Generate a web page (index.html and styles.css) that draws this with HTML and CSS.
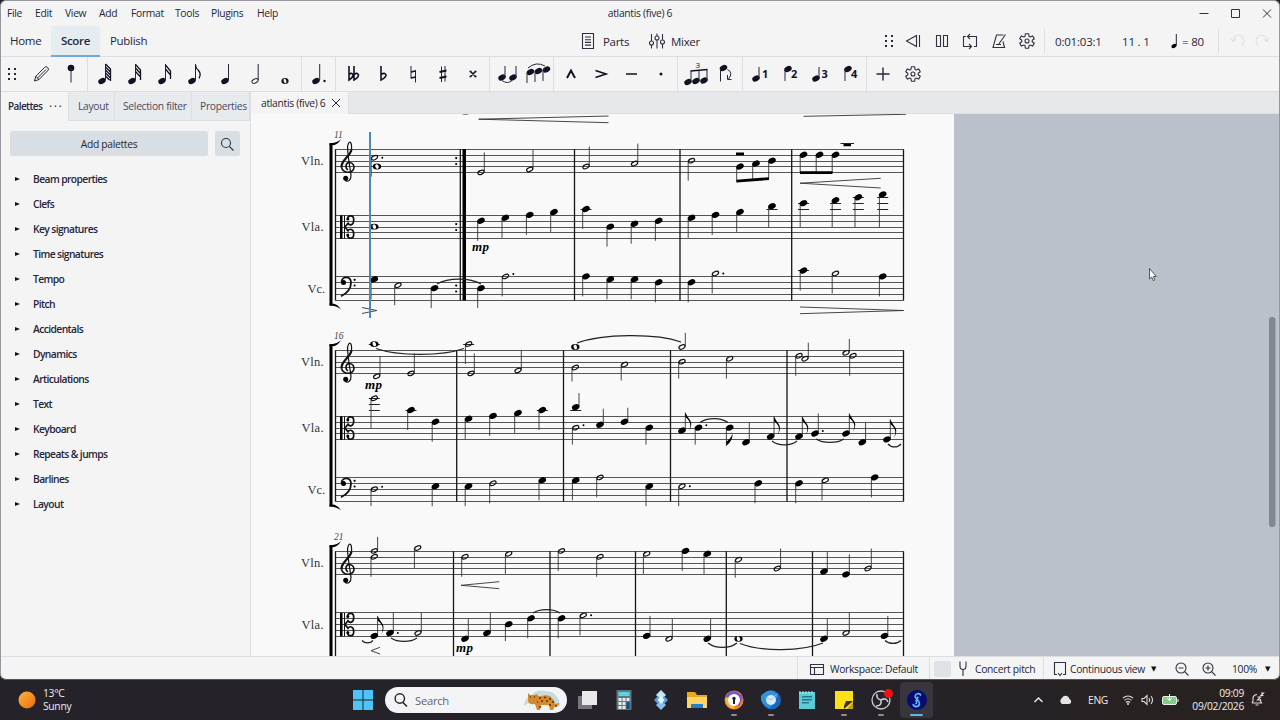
FILE: index.html
```html
<!DOCTYPE html>
<html lang="en">

<head>
  <meta charset="UTF-8" />
  <title>atlantis (five) 6</title>
  <meta name="viewport" content="width=device-width, initial-scale=1.0" />
  <link rel="stylesheet" href="styles.css">
</head>

<body>
  <!-- shared icons -->
  <svg class="defs" width="0" height="0">
    <symbol id="grip" viewBox="0 0 24 24">
      <g fill="#262638" stroke="none"><rect x="8" y="6" width="2" height="2"/><rect x="8" y="11" width="2" height="2"/><rect x="8" y="16" width="2" height="2"/><rect x="14" y="6" width="2" height="2"/><rect x="14" y="11" width="2" height="2"/><rect x="14" y="16" width="2" height="2"/></g>
    </symbol>
    <symbol id="gear" viewBox="0 0 24 24">
      <path d="M10 7.400 L10.300 4.700 H13.700 L14 7.400 L15 8 L17.600 6.900 L19.300 9.700 L17.200 11.300 V12.700 L19.300 14.300 L17.600 17.100 L15 16 L14 16.600 L13.700 19.300 H10.300 L10 16.600 L9 16 L6.400 17.100 L4.700 14.300 L6.800 12.700 V11.300 L4.700 9.700 L6.400 6.900 L9 8Z" stroke-linejoin="round"/>
      <circle cx="12" cy="12" r="2"/>
    </symbol>
    <symbol id="head" viewBox="-6 -6 12 12" overflow="visible">
      <ellipse rx="3.900" ry="2.800" transform="rotate(-25)"/>
    </symbol>
    <symbol id="lens" viewBox="0 0 24 24">
      <circle cx="11" cy="11" r="4.500"/><path d="M14.300 14.300 L18.500 18.500"/>
    </symbol>
  </svg>

  <div class="window">
    <header class="titlebar">
      <nav class="menu">
        <span>File</span><span>Edit</span><span>View</span><span>Add</span><span>Format</span><span>Tools</span><span>Plugins</span><span>Help</span>
      </nav>
      <div class="title">atlantis (five) 6</div>
      <svg class="winbuttons" width="96" height="24" viewBox="0 0 96 24">
        <path d="M16.500 12.500 h9 M48.500 8.500 h8 v8 h-8z M80 8.500 l8 8 M88 8.500 l-8 8"/>
      </svg>
    </header>

    <div class="mainbar">
      <nav class="pages">
        <span>Home</span><span class="active">Score</span><span>Publish</span>
      </nav>
      <div class="panels">
        <svg class="ic" width="24" height="24" viewBox="0 0 24 24"><path d="M6.500 4.500 h11 v15 h-11z M9 8 h6 M9 10.700 h6 M9 13.400 h6 M9 16.100 h6"/></svg><span class="parts">Parts</span>
        <svg class="ic" width="24" height="24" viewBox="0 0 24 24"><path d="M6.500 5 v7 M6.500 16 v3.500 M12 4.500 v2.500 M12 11 v8.500 M17.500 5 v6 M17.500 15 v4.500"/><circle cx="6.500" cy="14" r="2"/><circle cx="12" cy="9" r="2"/><circle cx="17.500" cy="13" r="2"/></svg><span>Mixer</span>
      </div>
      <div class="playback">
        <svg class="ic" width="24" height="24"><use href="#grip"/></svg>
        <svg class="ic" width="24" height="24" viewBox="0 0 24 24"><path d="M15.500 6.500 v11 L5.500 12z M18.500 6 v12"/></svg>
        <svg class="ic" width="24" height="24" viewBox="0 0 24 24"><path d="M6.500 6.500 h4 v11 h-4z M13.500 6.500 h4 v11 h-4z"/></svg>
        <svg class="ic" width="24" height="24" viewBox="0 0 24 24"><path d="M8 7.500 H5.500 v10 h7.500 M9.500 7.500 h9 v10 h-2.500 M12 5 l-2.500 2.500 l2.500 2.500 M11 15 l2.500 2.500 l-2.500 2.500"/></svg>
        <svg class="ic" width="24" height="24" viewBox="0 0 24 24"><path d="M16.500 6 H9.500 L6 18.500 h11.500 l-1.500-6 M11.500 15.500 L18.500 5.500 M9 15.500 h5"/></svg>
        <svg class="ic" width="24" height="24"><use href="#gear"/></svg>
      </div>
      <div class="timing">
        <span class="clock">0:01:03:1</span>
        <span class="beat">11 . 1</span>
        <svg width="10" height="18" viewBox="0 0 10 18"><ellipse cx="4" cy="14" rx="2.700" ry="1.900" transform="rotate(-25 4 14)"/><path d="M6.300 13.500 V2" stroke="#262638"/></svg>
        <span class="bpm">= 80</span>
      </div>
      <svg class="ic faded" width="58" height="24" viewBox="0 0 58 24"><path d="M14 12 a5.500 5.500 0 1 1 9 4 M11.500 9 l2.500 3.500 l3.500 -2.500 M48 12 a5.500 5.500 0 1 0 -9 4 M50.500 9 l-2.500 3.500 l-3.500 -2.500"/></svg>
    </div>

    <div class="notebar">
      <div class="group first">
        <svg class="ic" width="24" height="24"><use href="#grip"/></svg>
        <svg width="30" height="30" viewBox="0 0 30 30"><path class="line" d="M8.500 22 L9.800 17.300 L18.500 8.500 a1.800 1.800 0 0 1 3.200 3.200 L13 20.500z M9.800 17.300 l3.200 3.200 M11.500 19 L20 10.500"/></svg>
        <svg width="30" height="30" viewBox="0 0 30 30"><circle cx="15" cy="9" r="3.300"/><path class="line" d="M15 9 V23.500"/></svg>
      </div>
      <div class="group">
        <svg width="30" height="30" viewBox="0 0 30 30"><use href="#head" x="6" y="16" width="12" height="12"/><path class="line" d="M15.500 21 V5"/><path class="flag" d="M15.500 5 l5 5 v4 M15.500 8 l5 5 v4 M15.500 11 l5 5 v4 M15.500 14 l5 5 v3 M15.500 17 l4 4"/></svg>
        <svg width="30" height="30" viewBox="0 0 30 30"><use href="#head" x="6" y="16" width="12" height="12"/><path class="line" d="M15.500 21 V5"/><path class="flag" d="M15.500 5.500 l5 5.500 v4 M15.500 9 l5 5.500 v4 M15.500 12.500 l5 5.500 v3"/></svg>
        <svg width="30" height="30" viewBox="0 0 30 30"><use href="#head" x="6" y="16" width="12" height="12"/><path class="line" d="M15.500 21 V5"/><path class="flag" d="M15.500 6 l5 6 v4 M15.500 10 l5 6 v4"/></svg>
        <svg width="30" height="30" viewBox="0 0 30 30"><use href="#head" x="6" y="16" width="12" height="12"/><path class="line" d="M15.500 21 V5"/><path class="flag" d="M15.500 6 q0 3 3 5.500 q3 3 .5 8"/></svg>
        <svg width="30" height="30" viewBox="0 0 30 30"><use href="#head" x="9" y="16" width="12" height="12"/><path class="line" d="M18.500 21 V5"/></svg>
        <svg width="30" height="30" viewBox="0 0 30 30"><ellipse class="line" cx="15" cy="22" rx="3.300" ry="2" transform="rotate(-25 15 22)"/><path class="line" d="M18.200 21 V5"/></svg>
        <svg width="30" height="30" viewBox="0 0 30 30"><ellipse cx="15" cy="22" rx="3.600" ry="2.900"/><ellipse cx="15" cy="22" rx="1.300" ry="2.300" fill="#f4f4f5" transform="rotate(-20 15 22)"/></svg>
      </div>
      <div class="group">
        <svg width="30" height="30" viewBox="0 0 30 30"><use href="#head" x="6" y="16" width="12" height="12"/><path class="line" d="M15.700 21 V5"/><circle cx="20.500" cy="22" r="1.200"/></svg>
      </div>
      <div class="group">
        <svg width="30" height="30" viewBox="0 0 30 30"><path class="bold" d="M11 7 V21 q4 -2.500 4 -5 q-1-3-4-.5 M16 7 V21 q4.500 -2.500 4.500 -5 q-1-3-4.500-.5"/></svg>
        <svg width="30" height="30" viewBox="0 0 30 30"><path class="bold" d="M13 7 V21 q5 -2.500 5 -5 q-1-3-5-.5"/></svg>
        <svg width="30" height="30" viewBox="0 0 30 30"><path class="line" d="M13 7 V19.500 M17.500 11 V23.500"/><path class="bold" d="M13 13 L17.500 12 M13 19 L17.500 18"/></svg>
        <svg width="30" height="30" viewBox="0 0 30 30"><path class="line" d="M13.500 7.500 V23 M17 7 V22.500"/><path class="bold heavy" d="M11.500 13 L18.500 11.500 M11.500 19 L18.500 17.500"/></svg>
        <svg width="30" height="30" viewBox="0 0 30 30"><path class="bold" d="M12 12 l6 6 M18 12 l-6 6 M11.500 12.500 h2 M16.500 12.500 h2 M11.500 17.500 h2 M16.500 17.500 h2"/></svg>
      </div>
      <div class="group">
        <svg width="30" height="30" viewBox="0 0 30 30"><use href="#head" x="4" y="12.500" width="12" height="12"/><use href="#head" x="15" y="12.500" width="12" height="12"/><path class="line" d="M13 18 V7 M24 18 V7 M10 21.500 q5.500 4 10 0"/></svg>
        <svg width="30" height="30" viewBox="0 0 30 30"><use href="#head" x="2.500" y="7" width="12" height="12"/><use href="#head" x="10.500" y="6" width="12" height="12"/><use href="#head" x="18.500" y="4.500" width="12" height="12"/><path class="line" d="M5 13.500 V24 M13 12.500 V23 M21 11 V22 M6 9 q8 -7 17 -2"/></svg>
      </div>
      <div class="group">
        <svg width="30" height="30" viewBox="0 0 30 30"><path class="bold heavy" d="M11 19 L15 11.500 L19 19"/></svg>
        <svg width="30" height="30" viewBox="0 0 30 30"><path class="bold" d="M9.500 11.500 L20 15 L9.500 18.500"/></svg>
        <svg width="30" height="30" viewBox="0 0 30 30"><path class="bold" d="M10 15 H21"/></svg>
        <svg width="30" height="30" viewBox="0 0 30 30"><circle cx="15" cy="15" r="1.500"/></svg>
      </div>
      <div class="group tuplets">
        <svg width="30" height="30" viewBox="0 0 30 30"><use href="#head" x="1" y="17" width="12" height="12"/><use href="#head" x="9" y="16" width="12" height="12"/><use href="#head" x="17" y="15.500" width="12" height="12"/><path class="line" d="M10 22.500 V12 M26 10.500 V21 M18 22 V11.500"/><path class="bold" d="M9.500 12 L26.500 10.500"/><text x="14.500" y="9">3</text></svg>
        <svg width="30" height="30" viewBox="0 0 30 30"><use href="#head" x="6.500" y="3" width="12" height="12"/><path class="line" d="M9.500 9.500 V22.500 M16.500 10.500 q6 3 1 9.500 M16.500 16 v4.500 h4"/></svg>
      </div>
      <div class="group voices">
        <svg width="30" height="30" viewBox="0 0 30 30"><use href="#head" x="4" y="13.500" width="12" height="12"/><path class="line" d="M13 19 V8"/><text x="16" y="19">1</text></svg>
        <svg width="30" height="30" viewBox="0 0 30 30"><use href="#head" x="6" y="4" width="12" height="12"/><path class="line" d="M9 10.500 V22"/><text x="15" y="19">2</text></svg>
        <svg width="30" height="30" viewBox="0 0 30 30"><use href="#head" x="4" y="13.500" width="12" height="12"/><path class="line" d="M13 19 V8"/><text x="15.500" y="19">3</text></svg>
        <svg width="30" height="30" viewBox="0 0 30 30"><use href="#head" x="6" y="4" width="12" height="12"/><path class="line" d="M9 10.500 V22"/><text x="15" y="19">4</text></svg>
      </div>
      <div class="group last">
        <svg width="30" height="30" viewBox="0 0 30 30"><path class="line thick" d="M15 8.500 V21.500 M8.500 15 H21.500"/></svg>
        <svg class="ic gearbtn" width="24" height="24"><use href="#gear"/></svg>
      </div>
    </div>

    <main>
      <aside>
        <div class="tabs">
          <span class="tab on">Palettes<i>···</i></span><span class="tab">Layout</span><span class="tab">Selection filter</span><span class="tab">Properties</span>
        </div>
        <div class="tools">
          <button class="add">Add palettes</button>
          <button class="find"><svg class="ic" width="24" height="24"><use href="#lens"/></svg></button>
        </div>
        <ul class="palettes">
          <li>Beam properties</li>
          <li>Clefs</li>
          <li>Key signatures</li>
          <li>Time signatures</li>
          <li>Tempo</li>
          <li>Pitch</li>
          <li>Accidentals</li>
          <li>Dynamics</li>
          <li>Articulations</li>
          <li>Text</li>
          <li>Keyboard</li>
          <li>Repeats &amp; jumps</li>
          <li>Barlines</li>
          <li>Layout</li>
        </ul>
      </aside>
      <section class="editor">
        <div class="doctabs">
          <div class="doctab"><span>atlantis (five) 6</span><svg width="12" height="12" viewBox="0 0 12 12"><path class="line" d="M2 2 l8 8 M10 2 l-8 8"/></svg></div>
        </div>
        <div class="canvas">
          <svg id="score" width="703" height="542" viewBox="251 114 703 542"></svg>
          <svg class="desk" width="325" height="542" viewBox="954 114 325 542">
            <path d="M1149.500 268.500 V279 l2.200 -2 l1.600 3.600 l1.500 -.7 l-1.500 -3.400 h3z" fill="#fff" stroke="#333" stroke-width=".8"/>
            <rect x="1269" y="317" width="6.500" height="210" rx="3" fill="#82878f"/>
          </svg>
        </div>
      </section>
    </main>

    <footer class="status">
      <div class="cell workspace"><svg class="ic" width="24" height="24" viewBox="0 0 24 24"><path d="M5.500 7.500 h13 v10 h-13z M5.500 10.500 h13 M9.500 10.500 v7"/></svg>Workspace: Default</div>
      <div class="cell concert"><b></b><svg class="ic" width="24" height="24" viewBox="0 0 24 24"><path d="M9 4.500 V9 q0 3.500 3 3.500 q3 0 3 -3.500 V4.500 M12 12.500 V19"/></svg>Concert pitch</div>
      <div class="cell view"><svg class="ic" width="20" height="24" viewBox="0 0 20 24"><path d="M7 17.500 H4.500 V5.500 h11 V17.500 H13 M8 16 l2 2.500 l2 -2.500"/></svg>Continuous view<em>▼</em></div>
      <svg class="ic" width="24" height="24" viewBox="0 0 24 24"><circle cx="11" cy="11" r="5"/><path d="M14.700 14.700 L18.500 18.500 M8.500 11 h5"/></svg>
      <svg class="ic zin" width="24" height="24" viewBox="0 0 24 24"><circle cx="11" cy="11" r="5"/><path d="M14.700 14.700 L18.500 18.500 M8.500 11 h5 M11 8.500 v5"/></svg>
      <span class="zoom">100%</span><em>▼</em>
    </footer>
  </div>

  <div class="taskbar">
    <div class="weather">
      <svg width="18" height="18"><defs><linearGradient id="sun" x2="1" y2="1"><stop stop-color="#f9b93a"/><stop offset="1" stop-color="#ec6a10"/></linearGradient></defs><circle cx="9" cy="9" r="8.500" fill="url(#sun)"/></svg>
      <div>13°C<br>Sunny</div>
    </div>
    <svg class="start" width="20" height="20"><path fill="#4cc4f8" d="M0 0h9.500v9.500H0zM10.500 0H20v9.500h-9.500zM0 10.500h9.500V20H0zM10.500 10.500H20V20h-9.500z"/></svg>
    <div class="search">
      <svg width="16" height="16"><path d="M9.500 10 L14 14.500" stroke="#222" stroke-width="1.500"/><circle cx="6.800" cy="6.500" r="4.700" fill="none" stroke="#222" stroke-width="1.400"/></svg>
      <span>Search</span>
      <svg width="42" height="24" viewBox="0 0 42 24">
        <path d="M3 17 Q4 9 11 7 Q15 1 24 3 Q33 3 36 9 Q40 14 38 19 Q20 25 3 17" fill="#c3dce2"/>
        <path d="M3 18 Q9 12 15 17 L37 18 Q36 22 20 22 Q6 22 3 18" fill="#eef3f1"/>
        <path d="M7 5 l2 2 h4 l3-1 q1 3 4 2 q8-2 11 2 q3 3 3 6 l4-1 q1 3-4 3 l-2 4 h-3 l-1-5 l-8 0 l-1 5 h-3 l-2-6 q-6 1-7-3z" fill="#d58a30"/>
        <path d="M18 10 h2 M23 9.500 h2 M28 11 h2 M20 13 h2 M25 13 h2 M31 14 h2 M28 17 h2 M16 14 h1 M9 9 h1 M13 9 h1 M18 19 h2 M34 18 h2" stroke="#593115" stroke-width="1.300"/>
      </svg>
    </div>
    <div class="apps">
      <span><svg width="22" height="22"><rect x="2" y="7" width="14" height="13" fill="#77757b"/><rect x="6" y="2" width="15" height="14" fill="#e9e9ea"/></svg></span>
      <span><svg width="22" height="22"><rect x="3.500" y="1" width="15" height="20" rx="1" fill="#617682"/><path fill="#57d8e0" d="M5.500 3h11v4h-11z"/><path fill="#e6eef0" d="M5.500 9h3v3h-3zM9.500 9h3v3h-3zM13.500 9h3v3h-3zM5.500 13h3v3h-3zM9.500 13h3v3h-3zM5.500 17h3v3h-3zM9.500 17h3v3h-3z"/><path fill="#184d82" d="M13.500 13h3v7h-3z"/></svg></span>
      <span><svg width="22" height="22"><path d="M11 1 l5 5 l-5 5 l-5-5z" fill="#c3e3f8"/><path d="M11 11 l5 5 l-5 5 l-5-5z" fill="#86bfec"/><path d="M4 11 l4-4 l3 4 l-3 4z M18 11 l-4-4 l-3 4 l3 4z" fill="#5b9fd9"/><path d="M11 7 l3.500 4 l-3.500 4 l-3.500-4z" fill="#e1f2fc"/></svg></span>
      <span><svg width="22" height="22"><path d="M1 3h8l2 3h10v13H1z" fill="#e9a923"/><path d="M1 8h20v11H1z" fill="#fcd566"/><path d="M5 15h12v4H5z" fill="#2680c8"/></svg></span>
      <span class="run"><svg width="22" height="22"><circle cx="11" cy="11" r="9.500" fill="#ef7f2e"/><path d="M2 7 Q11-3 20 8 L16 17z" fill="#7855c9"/><path d="M2 9 Q3 20 12 20 L8 8z" fill="#f5b83e"/><circle cx="11" cy="11" r="6" fill="#fff"/><circle cx="11" cy="9.500" r="1.700" fill="#222"/><path d="M10 10h2v5h-2z" fill="#222"/></svg></span>
      <span class="run"><svg width="22" height="22"><circle cx="11.500" cy="11" r="9.500" fill="#1769c0"/><path d="M1 7 Q7 0 14 2 L18 7 L10 19 Q0 16 1 7" fill="#3192e2"/><circle cx="11" cy="11" r="5" fill="#d9eaf7"/><path d="M6 8 L11 11 L17 5" stroke="#92bde5" fill="none"/></svg></span>
      <span><svg width="22" height="22"><path fill="#5bcbd6" d="M3 3h16v17H3z"/><path fill="#247987" d="M6 7h10v1.500H6zM6 10h10v1.500H6zM6 13h7v1.500H6z"/><path d="M4 2v3M7 2v3M10 2v3M13 2v3M16 2v3" stroke="#bdeef2"/></svg></span>
      <span class="run"><svg width="22" height="22"><path fill="#fbdf18" d="M2 2h18v18H2z"/><path fill="#3b3420" d="M11 20v-3l2-5h7z"/><path fill="#c59f14" d="M14 20l6-7v7z"/></svg></span>
      <span class="run"><svg width="26" height="22" viewBox="-2 0 26 22"><circle cx="11" cy="11" r="9" fill="#252329" stroke="#ccc" stroke-width="1.300"/><path d="M11 11 q-5-1-4-6 M11 11 q5-3 7 2 M11 11 q1 6-5 6" fill="none" stroke="#ccc" stroke-width="1.600"/><circle cx="18.500" cy="4.500" r="4.500" fill="#ee1111"/></svg></span>
      <span class="run current"><svg width="22" height="22"><circle cx="11" cy="11" r="10" fill="#080c72"/><path d="M15 6.500 C13 3 8 5 9.500 8.500 C10.500 10.500 14 11.500 13.500 15 C12.500 18.500 8 18.500 7 15 M12.500 8 Q9.500 9.500 12.500 11.500 M9.500 11 Q12 13.500 9.500 15" fill="none" stroke="#61bdf4" stroke-width="1.600"/></svg></span>
    </div>
    <div class="tray">
      <svg width="60" height="24" viewBox="0 0 60 24"><path d="M6.500 14 l4 -4 l4 4" fill="none" stroke="#eee" stroke-width="1.400"/><path d="M34 16 a3.500 3.500 0 0 1 0-6 a4 4 0 0 1 7.500 1 a2.700 2.700 0 0 1 0 5z" fill="#e4e4e6"/></svg>
      <span class="lang">ENG</span>
      <svg width="62" height="24" viewBox="0 0 62 24"><g fill="none" stroke="#ddd" stroke-width="1.100"><path d="M4 10 q5-4 10 0 M5.500 12.300 q3.500-3 7 0 M7 14.500 q2-1.800 4 0 M23 10.500 h2 l3-3 v9 l-3-3 h-2z M30 10 q1.500 2 0 4 M32 8 q3 4 0 8"/></g><circle cx="9" cy="16" r="1"/><rect x="43.500" y="8.500" width="14" height="8" rx="1.500" fill="#86c98a" stroke="#e7f3e7"/><path d="M59 11v3M50.500 6v6M48 10l2.500 2.500L53 10" stroke="#fff" fill="none"/></svg>
      <div class="date">09:09<br>09/02/2026</div>
      <svg width="20" height="24" viewBox="0 0 20 24"><path d="M5 15 L6 13 V9.500 q1-3 4-3 M5 15 h9.500 l-1-2 v-2 M8.500 17 h3 M10.500 9 h3 l-3 3 h3 M14 5 h2.500 l-2.500 2.500 h2.500" fill="none" stroke="#ddd" stroke-width="1.100"/></svg>
    </div>
  </div>
  <script src="score.js"></script>
</body>

</html>
```
FILE: styles.css
```css
:root {
  --ink: #262638;
  --bg: #f4f4f5;
  --line: #dcdee1;
  --button: #d9dee3;
}

* {
  box-sizing: border-box;
}

body {
  margin: 0;
  width: 1280px;
  height: 720px;
  overflow: hidden;
  background: #25222a;
  color: var(--ink);
  font-family: "Open Sans", "Noto Sans", sans-serif;
  font-size: 10.3px;
  letter-spacing: -0.3px;
}

.defs {
  display: block;
}

svg {
  flex: none;
}

.window {
  height: 680px;
  border: 1px solid #98969c;
  border-bottom-color: #55545a;
  border-radius: 6px;
  background: var(--bg);
  overflow: hidden;
}

/* icons */
.ic {
  fill: none;
  stroke: #303042;
  stroke-width: 1.1;
}

.line {
  fill: none;
  stroke: #262638;
  stroke-width: 1;
}

.thick {
  stroke-width: 1.4;
}

.bold {
  fill: none;
  stroke: #111123;
  stroke-width: 1.6;
}

.heavy {
  stroke-width: 2;
}

.flag {
  fill: none;
  stroke: #111123;
  stroke-width: 1.3;
}

/* title bar */
.titlebar {
  display: grid;
  grid-template-columns: 500px 278px 1fr 96px;
  align-items: center;
  height: 25px;
  padding-bottom: 1px;
}

.menu {
  display: grid;
  grid-template-columns: 28px 30px 34px 32px 44px 36px 46px 40px;
  padding-left: 6px;
}

.title {
  text-align: center;
}

.winbuttons {
  grid-column: 4;
  fill: none;
  stroke: #333;
}

/* main bar */
.mainbar {
  display: grid;
  grid-template-columns: 149px 426px 301px 168px 174px 1fr;
  align-items: center;
  height: 31px;
  border-bottom: 1px solid var(--line);
  font-size: 11.5px;
}

.pages {
  display: grid;
  grid-template-columns: 50px 49px 50px;
  line-height: 29px;
  height: 30px;
}

.pages span {
  padding-left: 9px;
}

.pages span:last-child {
  padding-left: 10px;
}

.pages .active {
  padding: 0;
  text-align: center;
  font-weight: 600;
  background: #e6edf1;
  border-bottom: 2px solid #70a9d6;
}

.panels {
  grid-column: 3;
  display: flex;
  align-items: center;
}

.parts {
  width: 42px;
}

.panels .ic {
  margin-right: 2px;
}

.panels .ic:first-child {
  margin-right: 3px;
}

.playback {
  display: flex;
  gap: 4.4px;
  height: 24px;
  border-right: 1px solid var(--line);
}

.playback svg:first-child {
  margin-right: -4px;
}

.timing {
  display: flex;
  align-items: center;
  height: 24px;
  padding-left: 10px;
  border-right: 1px solid var(--line);
  letter-spacing: -0.2px;
}

.clock {
  width: 67px;
}

.beat {
  width: 48px;
}

.bpm {
  padding-left: 2px;
}

.faded {
  stroke: #dfe0e2;
}

/* note input bar */
.notebar {
  display: flex;
  height: 35px;
  border-bottom: 1px solid var(--line);
  fill: #111123;
}

.group {
  display: flex;
  align-items: center;
  padding: 0 1px 0 2px;
  border-right: 1px solid var(--line);
}

.group.first {
  width: 87px;
  padding: 0;
}

.group.first .ic {
  margin-left: -1px;
  margin-right: 2px;
}

.group.tuplets {
  padding-left: 3px;
}

.group.voices {
  padding-left: 3px;
  padding-right: 0;
}

.group.last {
  padding-left: 1px;
  border: 0;
}

.gearbtn {
  margin-left: 3px;
}

.tuplets text {
  font-size: 8px;
}

.voices text {
  font-size: 11px;
  font-weight: 700;
}

/* side panel */
main {
  display: flex;
  height: 564px;
}

aside {
  width: 250px;
  border-right: 1px solid var(--line);
}

.tabs {
  display: grid;
  grid-template-columns: 68px 46px 77px 1fr;
  height: 29px;
}

.tab {
  padding-left: 8px;
  line-height: 28px;
  white-space: nowrap;
  background: #e8ebee;
  border-right: 1px solid var(--line);
  border-bottom: 1px solid var(--line);
  color: #4a4a5a;
}

.tab:nth-child(2) {
  padding-left: 9px;
}

.tab.on {
  padding-left: 7px;
  font-weight: 600;
  font-size: 10px;
  letter-spacing: -0.6px;
  background: var(--bg);
  border-bottom: 0;
  color: var(--ink);
}

.tab i {
  margin-left: 7px;
  font-style: normal;
  letter-spacing: 2px;
}

.tools {
  display: flex;
  gap: 7px;
  padding: 10px 9px 0;
}

.tools button {
  height: 25px;
  padding: 0;
  border: 0;
  border-radius: 2px;
  background: var(--button);
  color: var(--ink);
  font: inherit;
  letter-spacing: inherit;
}

.tools .add {
  width: 198px;
}

.tools .find {
  width: 25px;
}

.find svg {
  display: block;
}

.palettes {
  margin: 10px 0 0;
  padding: 0;
  list-style: none;
}

.palettes li {
  display: flex;
  align-items: center;
  height: 25px;
  padding-left: 14px;
  font-weight: 600;
  letter-spacing: -0.6px;
}

.palettes li::before {
  content: "";
  margin-right: 13px;
  border: 2.7px solid transparent;
  border-left: 5px solid #111123;
  border-right: 0;
}

/* editor */
.editor {
  flex: 1;
}

.doctabs {
  height: 22px;
  background: #e5e9ec;
  border-bottom: 1px solid var(--line);
}

.doctab {
  display: flex;
  align-items: center;
  justify-content: space-between;
  width: 98px;
  height: 22px;
  padding: 0 6px 0 10px;
  white-space: nowrap;
  background: var(--bg);
  border-right: 1px solid var(--line);
}

.canvas {
  display: flex;
  height: 542px;
  background: #bbc1ca;
}

#score {
  background: #f9f9fa;
  letter-spacing: 0;
}

.staff {
  stroke: #555;
}

.ledger {
  stroke: #222;
}

.stem {
  stroke: #333;
  stroke-width: .9;
  fill: none;
}

.barline {
  stroke: #151515;
  stroke-width: 1.3;
}

.hollow {
  fill: none;
  stroke: #111;
  stroke-width: 1.2;
}

.hole {
  fill: #f9f9fa;
}

.wedge {
  fill: none;
  stroke: #333;
  stroke-width: .9;
}

.tie {
  fill: none;
  stroke: #222;
  stroke-width: 1.2;
}

.clef {
  fill: none;
  stroke: #111;
}

.name {
  font: 12.5px "Liberation Serif", serif;
  fill: #333;
}

.number {
  font: italic 9.5px "Liberation Serif", serif;
  fill: #444;
}

.dynamic {
  font: italic bold 13px "Liberation Serif", serif;
}

.playhead {
  stroke: #4a88bd;
  stroke-width: 2;
}

/* status bar */
.status {
  display: flex;
  align-items: center;
  justify-content: flex-end;
  height: 23px;
  padding-top: 1px;
  border-top: 1px solid var(--line);
}

.cell {
  flex: none;
  display: flex;
  align-items: center;
  height: 23px;
  border-left: 1px solid var(--line);
  white-space: nowrap;
}

.workspace {
  width: 132px;
  padding-left: 7px;
}

.workspace .ic {
  margin-right: 1px;
}

.concert {
  width: 114px;
  padding-left: 4px;
}

.concert b {
  width: 17px;
  height: 16px;
  border-radius: 2px;
  background: #dfe3e8;
}

.concert .ic {
  margin: 0;
}

.view {
  width: 127px;
  padding-left: 6px;
}

.status em {
  font: 7px "DejaVu Sans", sans-serif;
  color: #111;
}

.view em {
  margin-left: 6px;
}

.zin {
  margin-left: 3px;
}

.zoom {
  width: 42px;
  padding-left: 11px;
  white-space: nowrap;
}

.zoom + em {
  width: 16px;
  padding-left: 2px;
}

/* taskbar */
.taskbar {
  display: grid;
  grid-template-columns: 353px 32px 184px 367px 1fr;
  align-items: center;
  height: 40px;
  background: linear-gradient(90deg, #25222a, #25222a 60%, #28211f);
  color: #eee;
}

.weather {
  display: flex;
  align-items: center;
  gap: 7px;
  padding-left: 18px;
  line-height: 13px;
}

.search {
  display: flex;
  align-items: center;
  width: 182px;
  height: 26px;
  padding-left: 8px;
  border-radius: 13px;
  background: #f4f4f6;
  color: #666;
  font-size: 11.3px;
}

.search span {
  width: 112px;
  padding-left: 6px;
}

.apps {
  display: flex;
}

.apps span {
  display: flex;
  flex-direction: column;
  align-items: center;
  width: 36.7px;
  height: 36px;
  padding-top: 7px;
}

.apps .run::after {
  content: "";
  width: 6px;
  height: 2px;
  margin-top: 3px;
  border-radius: 1px;
  background: #8f8d92;
}

.apps .current {
  width: 33px;
  margin-left: 1px;
  border-radius: 4px;
  background: #38353c;
}

.apps .current::after {
  width: 13px;
  background: #5bb9ea;
}

.tray {
  display: flex;
  align-items: center;
  justify-content: flex-end;
  padding-right: 13px;
  fill: #ddd;
}

.lang {
  width: 31px;
}

.date {
  width: 63px;
  margin-right: 3px;
  text-align: right;
  line-height: 13px;
}
```
FILE: score.js
```js
// draws the systems of the score
const GAP = 5.87
const LEFT = 335.5
const RIGHT = 903.5

// note: type, x, position (half spaces below top line), stem (u/d/-), stem length
const systems = [
  {
    number: 11, top: [149.3, 215.3, 276.8], bars: [574.5, 680, 791.7, 903.5], bottom: 300.5,
    staves: [
      "h. 374.5 3 d 19,w 377 6 -,h 481 8 u,h 529.7 7 u,h 586 6 u,h 634.5 5 u,h 691.5 4 d,q 740 6 d 14,q 756 5 d 16,q 772 4 d 18,q 803.5 2 d 18,q 819.5 2 d 18,q 835.5 2 d 18",
      "w 374.3 4 -,q 481 2 d,q 505.3 1 d,q 529.7 0 d,q 554 -1 d,q 586 -2 d,q 610.3 4 d,q 634.5 3 d,q 658.7 2 d,q 691.5 1 d,q 715.5 0 d,q 740 -1 d,q 772 -3 d,q 803.5 -4 d,q 835.5 -5 d,q 858.3 -6 d,q 882.7 -7 d",
      "q 374.3 1 d,h 398 3 d,q 434.5 4 d,q 481 4 d,h. 505.5 0 d,q 586 0 d,q 610.3 1 d,q 634.5 1 d,q 658.7 2 d,q 691.5 2 d,h. 715.5 -1 d,q 803.5 -2 d,h 835.5 -1 d,q 882.7 0 d",
    ],
  },
  {
    number: 16, top: [350.3, 416.3, 477.8], bars: [456.7, 563.5, 670.5, 787, 903.5], bottom: 501.5,
    staves: [
      "w 374.3 -2 -,h 376.7 9 u,h 411 8 u,h 468.7 -2 d 20,h 471 8 u,h 518 7 u,w 575.3 -1 -,h 575.3 6 d 14,h 624.5 5 d 16,h 682 -1 u 14,h 682 4 d 17,h 729.7 3 d,h 799 2 d,h 805 3 u 16,h 846 1 u 14,h 853 2 d",
      "h 374.3 -6 d,q 411 -2 d,q 435.5 2 d,q 468.5 1 d,q 493 0 d,q 518 -1 d,q 542.3 -2 d,q 575.7 -3 u 14,h. 575.7 4 d 17,q 600 3 u 16,q 624.5 2 u 14,q 649.3 4 d 17,e 682 5 u 18,q. 698.5 4 d 17,e 729.7 4 d 18,q 746 9 u,e 770.7 7 u,e 799 7 u,q. 815 6 u,e 846 6 u,q 862.3 9 u,e 887 8 u",
      "h. 374.3 4 d 17,q 435.5 3 d,q 468.5 3 d,h 493 2 d,q 542.3 1 d,q 575.7 1 d,h 600 0 d,q 649.3 3 d,h. 682 3 d,q 758.3 2 d,q 799 2 d,h 825.3 1 d,q 874.7 0 d",
    ],
  },
  {
    number: 21, top: [551.3, 612.8, 700], bars: [453.5, 550, 635.5, 726.3, 812.5, 903.5], bottom: 720,
    staves: [
      "h 374.3 0 u 14,h 374.3 2 d,h 417.7 -1 d,h 465 2 d,h 508.7 1 d,h 561.5 0 d,h 600 2 d,h 646.7 1 d,q 685.5 0 d,q 707.3 1 d,h 738.5 3 d 18,h 777.3 6 u,q 824 7 u,q 846 8 u,h 868 6 u",
      "e 374.3 8 u,q. 390 7 u,h 418 7 u,q 465 9 u,q 487 7 u,q 508.7 4 d 17,q 531 2 d,q 561.5 2 d,h. 583.3 1 d,q 646.7 8 u,h 669 9 u,q 707.3 9 u,w 738.5 9 -,q 824 9 u,h 846 7 u,q 884.5 8 u",
    ],
  },
]

// x1 y1 x2 y2 height (negative is above)
const ties = [
  [437, 284, 481, 284, -5], [376, 348.5, 464, 348.5, 6], [577, 343, 681, 342, -7],
  [700, 422.5, 728, 422.5, -4], [772, 441, 797, 441, 4], [816, 439, 844, 439, 3.5],
  [888, 444, 901, 444, 3], [362, 640.5, 373, 640.5, 2.5], [391, 638, 417, 638, 3.5],
  [533, 613, 560, 613, -3.5], [708, 643, 737, 643, 4.5], [740, 643.5, 823, 643, 6.5],
  [885, 640.5, 901, 640.5, 3], [460, 112, 471, 112, 2],
]

const wedges = [
  "M608.500 116 L478.700 119.200 L608.500 122.700", "M803.500 116.300 L906 114.300",
  "M880.700 178.300 L800 183.200 L880.700 188", "M800 307 L903.700 310.500 L800 313.700",
  "M362 307.500 L376.700 310.500 L362 313.500", "M499.300 581.700 L461 585.300 L499.300 588.700",
  "M380 647.300 L371 650.700 L380 654",
]

let out = ""

function path(cls, d, extra = "") {
  out += `<path class="${cls}" d="${d}" ${extra}/>`
}

function drawNote(spec, top) {
  const [type, xs, ps, dir, len] = spec.split(" ")
  const x = Number(xs)
  const pos = Number(ps)
  const y = top - .4 + pos * GAP / 2

  for (let p = -2; p >= pos; p -= 2) path("ledger", `M${x - 5.5} ${Math.floor(top - .4 + p * GAP / 2) + .5} h11`)
  for (let p = 10; p <= pos; p += 2) path("ledger", `M${x - 5.5} ${Math.floor(top - .4 + p * GAP / 2) + .5} h11`)

  if (dir === "u") {
    const end = len ? y - len : y - 20
    path("stem", `M${x + 3.3} ${y - 1} V${end}`)
    if (type[0] === "e") path("note", `M${x + 3.3} ${end} v4.500 q5 4 5 8 q0 3 -1.500 6 q4 -6 1.500 -10.500 q-3 -4 -5 -8z`)
  } else if (dir === "d") {
    const end = len ? y + Number(len) : Math.max(y + 20, top + 2 * GAP)
    path("stem", `M${x - 3.3} ${y + 1} V${end}`)
    if (type[0] === "e") path("note", `M${x - 3.3} ${end} v-4 q5 -4 5.500 -7 q0 -3 -.5 -4 q2 5 0 9 q-2 4 -5 6z`)
  }

  const turn = `transform="rotate(-25 ${x} ${y})"`
  if (type[0] === "w") {
    out += `<ellipse cx="${x}" cy="${y}" rx="4.200" ry="2.900"/>`
    out += `<ellipse class="hole" cx="${x}" cy="${y}" rx="1.700" ry="2.400" transform="rotate(-20 ${x} ${y})"/>`
  } else if (type[0] === "h") {
    out += `<ellipse class="hollow" cx="${x}" cy="${y}" rx="3.300" ry="1.900" ${turn}/>`
  } else {
    out += `<ellipse cx="${x}" cy="${y}" rx="4" ry="2.800" ${turn}/>`
  }
  if (type[1] === ".") out += `<circle cx="${x + 7.8}" cy="${pos % 2 ? y : y - 2.5}" r="1"/>`
}

function treble(t) {
  path("clef", `M348 ${t + 20.5} C344.500 ${t + 18} 346 ${t + 13.5} 349 ${t + 13.2} C353 ${t + 13} 355 ${t + 17} 353.500 ${t + 20} C351 ${t + 24.5} 343 ${t + 24} 341.500 ${t + 18}`, 'stroke-width="1.6"')
  path("clef", `M341.500 ${t + 18} C340.500 ${t + 11} 350.500 ${t + 7} 351.500 ${t}`, 'stroke-width="2.2"')
  path("clef", `M351.500 ${t} C352 ${t - 7} 349.500 ${t - 10} 347.800 ${t - 4} C346.600 ${t} 350 ${t + 18} 351 ${t + 26} C351.300 ${t + 31} 347.500 ${t + 33} 345 ${t + 31}`, 'stroke-width="1.2"')
  out += `<circle cx="345.700" cy="${t + 29}" r="2.500"/>`
}

function alto(t) {
  out += `<rect x="340" y="${t}" width="2.500" height="23.500"/>`
  path("clef", `M344.500 ${t} v23.500`)
  path("clef", `M347.500 ${t + 3} C348.500 ${t - .5} 354 ${t - .5} 353.700 ${t + 5} C353.700 ${t + 10} 349.500 ${t + 10.5} 348 ${t + 8} L345 ${t + 11.7} L348 ${t + 15.4} C349.500 ${t + 13} 353.700 ${t + 13.5} 353.700 ${t + 18.5} C354 ${t + 24} 348.500 ${t + 24} 347.500 ${t + 20.5}`, 'stroke-width="1.7"')
  out += `<circle cx="347.800" cy="${t + 3.7}" r="1.500"/><circle cx="347.800" cy="${t + 19.7}" r="1.500"/>`
}

function bass(t) {
  out += `<circle cx="343.500" cy="${t + 5.8}" r="2.500"/><circle cx="354.600" cy="${t + 3}" r="1.100"/><circle cx="354.600" cy="${t + 8.700}" r="1.100"/>`
  path("clef", `M341.500 ${t + 5} C342 ${t - 1} 351 ${t - 1} 351 ${t + 6} C351 ${t + 13} 346 ${t + 17} 341 ${t + 19.5}`, 'stroke-width="1.800"')
}

for (const s of systems) {
  const [a, b, c] = s.top
  for (const t of s.top) {
    for (let i = 0; i < 5; i++) path("staff", `M${LEFT} ${Math.floor(t + i * GAP) + .5} H${RIGHT}`)
  }
  for (const x of [LEFT, ...s.bars]) path("barline", `M${x} ${a} V${s.bottom}`)

  // bracket
  out += `<rect x="329.500" y="${a - 6}" width="3" height="${s.bottom - a + 11}"/>`
  path("note", `M329.500 ${a - 4} v-2 q7 0 11.500 -4 q-3.500 6 -9 6z M329.500 ${s.bottom + 3} v2 q7 0 11.500 4 q-3.500 -6 -9 -6z`)

  out += `<text class="number" x="334" y="${a - 11.500}">${s.number}</text>`
  out += `<text class="name" x="301" y="${a + 15.700}" textLength="22.500">Vln.</text>`
  out += `<text class="name" x="301.500" y="${b + 15.700}" textLength="22">Vla.</text>`
  if (c < 656) out += `<text class="name" x="307.500" y="${c + 15.700}">Vc.</text>`
  treble(a)
  alto(b)
  bass(c)
  s.staves.forEach((notes, i) => notes.split(",").forEach((n) => drawNote(n, s.top[i])))
}

// end repeat in bar 11
path("barline", "M460.300 149.300 V300.500")
out += '<rect x="462.500" y="149" width="3.500" height="151.500"/>'
for (const t of systems[0].top) out += `<circle cx="456.200" cy="${t + 8.8}" r="1.100"/><circle cx="456.200" cy="${t + 14.7}" r="1.100"/>`

// beams and rests of bars 14 and 15
path("note", "M736.300 179.700 L769 177.200 V180 L736.300 182.500z M800 171.300 H832.500 V174 H800z")
path("note", "M736 152.500 h8 v2.700 h-8z M843.500 143.500 h7.500 v2.700 h-7.500z")
path("ledger", "M840.500 143.500 h13.500")

for (const [x1, y1, x2, y2, h] of ties) {
  path("tie", `M${x1} ${y1} C${x1 + (x2 - x1) * .25} ${y1 + h * 1.3} ${x1 + (x2 - x1) * .75} ${y2 + h * 1.3} ${x2} ${y2}`)
}
for (const d of wedges) path("wedge", d)
for (const [x, y] of [[472, 251], [365, 389], [456, 652]]) out += `<text class="dynamic" x="${x}" y="${y}" textLength="17">mp</text>`
path("playhead", "M370 132 V318")

document.querySelector("#score").innerHTML = out
```
